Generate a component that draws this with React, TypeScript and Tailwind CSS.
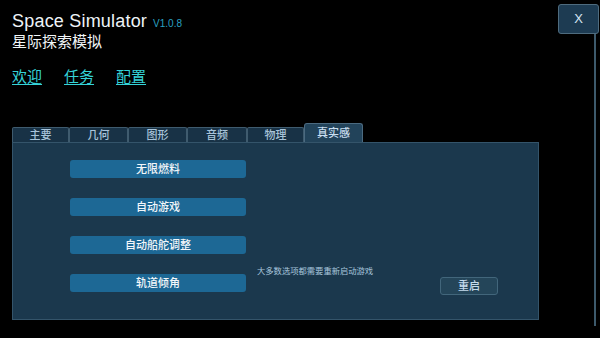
import React from "react";

const tabs = [
  { label: "主要", w: "w-[57px]" },
  { label: "几何", w: "w-[59px]" },
  { label: "图形", w: "w-[59px]" },
  { label: "音频", w: "w-[60px]" },
  { label: "物理", w: "w-[57px]" },
  { label: "真实感", w: "w-[59px]" },
];
const options = ["无限燃料", "自动游戏", "自动船舵调整", "轨道倾角"];

const cjk = { fontFamily: '"Liberation Sans", "Noto Sans CJK SC", sans-serif' };

export default function App() {
  return (
    <div className="flex h-[338px] w-[600px] overflow-hidden bg-black text-white" style={cjk}>
      <div className="flex w-[539px] flex-col pl-3">
        <div className="flex items-end gap-[6px] pt-[10px]">
          <span className="text-[18px] leading-[22px] tracking-[0.2px] text-[#eef4f8]">Space Simulator</span>
          <span className="mb-[3px] text-[10px] leading-[10px] text-[#2aa0c2]">V1.0.8</span>
        </div>
        <div className="text-[15px] leading-[20px] text-[#f2f6f8]">星际探索模拟</div>

        <div className="mt-[15px] flex gap-[22px] text-[15px] leading-[20px] text-[#35d3d8]">
          <span className="underline underline-offset-2">欢迎</span>
          <span className="underline underline-offset-2">任务</span>
          <span className="underline underline-offset-2">配置</span>
        </div>

        <div className="mt-[36px] flex h-[19px] items-end">
          {tabs.map((t, i) => {
            const active = i === tabs.length - 1;
            return (
              <div
                key={t.label}
                className={
                  active
                    ? `flex h-[19px] ${t.w} items-center justify-center rounded-t-[3px] border border-b-0 border-[#4b6a80] bg-[#22435a] text-[11px] font-medium text-[#c9def0]`
                    : `flex h-[15px] ${t.w} items-center justify-center rounded-t-[2px] border border-b-0 border-[#3f5b6e] bg-[#183246] text-[11px] font-medium text-[#a8c4da]`
                }
              >
                {t.label}
              </div>
            );
          })}
        </div>

        <div className="flex h-[178px] border border-[#34546a] bg-[#1b384d]">
          <div className="flex w-[244px] flex-col gap-[20px] pl-[57px] pt-[17px]">
            {options.map((o) => (
              <div
                key={o}
                className="flex h-[18px] w-[176px] items-center justify-center rounded-[3px] bg-[#1d6895] text-[11px] font-medium text-[#f3f7fa]"
              >
                {o}
              </div>
            ))}
          </div>
          <div className="flex flex-1 flex-col pt-[123px]">
            <div className="text-[8.3px] leading-[10px] text-[#a9c7dd]">大多数选项都需要重新启动游戏</div>
            <div className="ml-[183px] mt-[1px] flex h-[18px] w-[58px] items-center justify-center rounded-[3px] border border-[#42667b] bg-[#244559] text-[11px] font-medium text-[#c5dbec]">
              重启
            </div>
          </div>
        </div>
      </div>

      <div className="ml-[19px] flex w-[41px] flex-col items-end pt-1">
        <div className="flex h-[30px] w-[41px] items-center justify-center rounded-[3px] border border-[#4e6b7e] bg-[#1d3b52] text-[13px] text-[#d6e6f2]">
          X
        </div>
        <div className="mr-[3px] h-[292px] w-[2px] bg-[#3d5a6c]" />
      </div>
    </div>
  );
}
